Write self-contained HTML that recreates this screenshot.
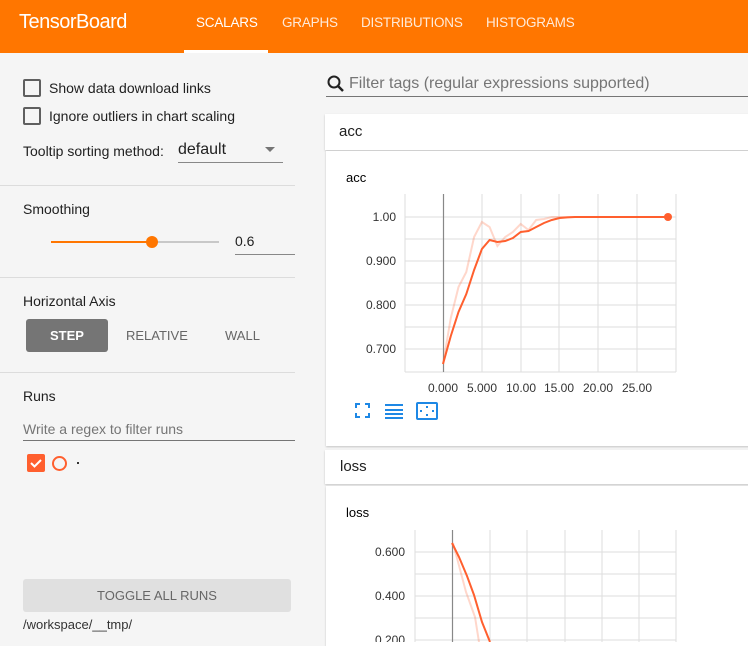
<!DOCTYPE html>
<html><head><meta charset="utf-8"><style>
*{box-sizing:border-box}
body{margin:0;width:748px;height:642px;overflow:hidden;background:#f5f5f5;font-family:"Liberation Sans",sans-serif;position:relative;color:#212121}
.hdr{position:absolute;left:0;top:0;width:748px;height:53px;background:#ff7600}
.hdr .t{position:absolute;left:19px;top:11px;color:#fff;font-size:20px;letter-spacing:-0.5px}
.tab{position:absolute;top:15px;color:#fff;font-size:13.5px;opacity:.85;letter-spacing:-0.2px}
.ul{position:absolute;left:184px;top:50px;width:84px;height:3px;background:#fff}
.a{position:absolute;white-space:nowrap}
.cb{position:absolute;width:18px;height:18px;border:2px solid #5f5f5f;border-radius:2px}
.hr{position:absolute;left:0;width:295px;height:1px;background:#dcdcdc}
.card{position:absolute;background:#fff;box-shadow:0 1px 2px rgba(0,0,0,.2)}
</style></head><body>
<div class="hdr">
<div class="t">TensorBoard</div>
<div class="tab" style="left:196px;opacity:1">SCALARS</div>
<div class="tab" style="left:282px">GRAPHS</div>
<div class="tab" style="left:361px">DISTRIBUTIONS</div>
<div class="tab" style="left:486px">HISTOGRAMS</div>
<div class="ul"></div>
</div>

<div class="cb" style="left:23px;top:79px"></div>
<div class="a" style="left:49px;top:80px;font-size:14px">Show data download links</div>
<div class="cb" style="left:23px;top:107px"></div>
<div class="a" style="left:49px;top:108px;font-size:14px">Ignore outliers in chart scaling</div>
<div class="a" style="left:23px;top:143px;font-size:14px">Tooltip sorting method:</div>
<div class="a" style="left:178px;top:141px;font-size:16px">default</div>
<div class="a" style="left:265px;top:147px;width:0;height:0;border-left:5px solid transparent;border-right:5px solid transparent;border-top:5px solid #757575"></div>
<div class="a" style="left:178px;top:162px;width:105px;height:1px;background:#888"></div>
<div class="hr" style="top:185px"></div>
<div class="a" style="left:23px;top:201px;font-size:14px">Smoothing</div>
<div class="a" style="left:51px;top:241px;width:101px;height:2px;background:#ff7600"></div>
<div class="a" style="left:152px;top:241px;width:67px;height:2px;background:#c8c8c8"></div>
<div class="a" style="left:146px;top:236px;width:12px;height:12px;border-radius:50%;background:#ff7600"></div>
<div class="a" style="left:235px;top:233px;font-size:14px">0.6</div>
<div class="a" style="left:235px;top:254px;width:60px;height:1px;background:#888"></div>
<div class="hr" style="top:277px"></div>
<div class="a" style="left:23px;top:293px;font-size:14px">Horizontal Axis</div>
<div class="a" style="left:26px;top:319px;width:82px;height:33px;background:#757575;border-radius:3px;color:#fff;font-size:13px;font-weight:bold;text-align:center;line-height:33px">STEP</div>
<div class="a" style="left:126px;top:328px;font-size:13px;color:#666">RELATIVE</div>
<div class="a" style="left:225px;top:328px;font-size:13px;color:#666">WALL</div>
<div class="hr" style="top:372px"></div>
<div class="a" style="left:23px;top:388px;font-size:14px">Runs</div>
<div class="a" style="left:23px;top:421px;font-size:14px;color:#757575">Write a regex to filter runs</div>
<div class="a" style="left:23px;top:440px;width:272px;height:1px;background:#757575"></div>
<div class="a" style="left:27px;top:454px;width:18px;height:18px;background:#ff5f2e;border-radius:2px"><svg width="18" height="18"><path d="M4 9l3.5 3.5L14 6" stroke="#fff" stroke-width="2" fill="none"/></svg></div>
<div class="a" style="left:52px;top:456px;width:15px;height:15px;border:2px solid #ff5f2e;border-radius:50%"></div>
<div class="a" style="left:77px;top:462px;width:2px;height:2px;background:#333"></div>
<div class="a" style="left:23px;top:579px;width:268px;height:33px;background:#e0e0e0;border-radius:3px;color:#666;font-size:13px;text-align:center;line-height:33px">TOGGLE ALL RUNS</div>
<div class="a" style="left:23px;top:617px;font-size:13px;color:#333">/workspace/__tmp/</div>

<svg class="a" style="left:326px;top:74px" width="20" height="20"><circle cx="8" cy="8" r="5.5" stroke="#222" stroke-width="2" fill="none"/><path d="M12 12l5 5" stroke="#222" stroke-width="2.5"/></svg>
<div class="a" style="left:349px;top:75px;font-size:16px;color:#757575">Filter tags (regular expressions supported)</div>
<div class="a" style="left:326px;top:96px;width:422px;height:1px;background:#757575"></div>

<div class="card" style="left:325px;top:114px;width:430px;height:36px"><div class="a" style="left:14px;top:9px;font-size:15px">acc</div></div>
<div class="card" style="left:326px;top:151px;width:430px;height:295px"></div>
<div class="card" style="left:325px;top:450px;width:430px;height:34px"><div class="a" style="left:15px;top:8px;font-size:15px">loss</div></div>
<div class="card" style="left:326px;top:486px;width:430px;height:160px"></div>

<div class="a" style="left:346px;top:170px;font-size:13px;color:#000">acc</div>
<div class="a" style="left:346px;top:505px;font-size:13px;color:#000">loss</div>

<svg class="a" style="left:0;top:0" width="748" height="642" font-family="Liberation Sans,sans-serif" font-size="12" fill="#333">
<g stroke="#ddd" stroke-width="1">
<path d="M405 194V372M482 194V372M521 194V372M559 194V372M598 194V372M637 194V372M676 194V372"/>
<path d="M405 217H676M405 239H676M405 261H676M405 283H676M405 305H676M405 327H676M405 349H676M405 372H676"/>
<path d="M415 530V642M490 530V642M527 530V642M565 530V642M602 530V642M639 530V642M676 530V642"/>
<path d="M415 552H676M415 574H676M415 596H676M415 618H676M415 640H676"/>
</g>
<path d="M443.5 194V372M452.5 530V642" stroke="#888" stroke-width="1.2"/>
<g text-anchor="end"><text x="396" y="221">1.00</text><text x="396" y="265">0.900</text><text x="396" y="309">0.800</text><text x="396" y="353">0.700</text>
<text x="405" y="556">0.600</text><text x="405" y="600">0.400</text><text x="405" y="644">0.200</text></g>
<g text-anchor="middle"><text x="443" y="392">0.000</text><text x="482" y="392">5.000</text><text x="521" y="392">10.00</text><text x="559" y="392">15.00</text><text x="598" y="392">20.00</text><text x="637" y="392">25.00</text></g>
<polyline fill="none" stroke="#ff5f2e" stroke-opacity=".25" stroke-width="2" points="443,364 450.8,318 458.5,287 466.3,272 474.1,237 481.9,222 489.6,227 497.4,246 505.2,237 512.9,232 520.7,224 528.5,230 536.2,220 544,219 551.8,217 668,217"/>
<polyline fill="none" stroke="#ff5f2e" stroke-width="2" points="443,364 450.8,336 458.5,312 466.3,294 474.1,270 481.9,249 489.6,240 497.4,242 505.2,241 512.9,238 520.7,232 528.5,231 536.2,227 544,223 551.8,220 559.6,218 567.3,217.4 575,217 668,217"/>
<circle cx="668" cy="217" r="4" fill="#ff5f2e"/>
<polyline fill="none" stroke="#ff5f2e" stroke-opacity=".25" stroke-width="2" points="453,543 466,592 475,617 479,642"/>
<polyline fill="none" stroke="#ff5f2e" stroke-width="2" points="452,543 459,557 467,576 474,595 482,622 490,642"/>
<g stroke="#1e88e5" stroke-width="2" fill="none">
<path d="M356 408v-4h4M365 404h4v4M369 413v4h-4M360 417h-4v-4"/>
<path d="M385 405h18M385 410h18M385 414h18M385 418h18"/>
<rect x="417" y="403" width="20" height="16" rx="1"/>
</g>
<g fill="#1e88e5"><rect x="426" y="406" width="2" height="2"/><rect x="426" y="414" width="2" height="2"/><rect x="420" y="410" width="2" height="2"/><rect x="432" y="410" width="2" height="2"/></g>
</svg>
</body></html>
